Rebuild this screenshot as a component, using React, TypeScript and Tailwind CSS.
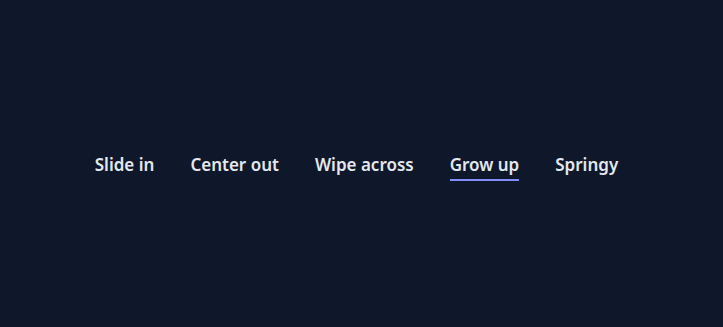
import React from "react";

const items = ["Slide in", "Center out", "Wipe across", "Grow up", "Springy"];

export default function App() {
  return (
    <div className="w-full h-[327px] bg-[#0f172a] flex items-center justify-center" style={{ fontFamily: '"Noto Sans", "Open Sans", sans-serif' }}>
      <nav className="flex items-center gap-9 mt-[6px] mr-[10px]">
        {items.map((t) => (
          <a key={t} className={`relative text-[17px] leading-[24px] font-semibold text-slate-200 pb-[2px] ${t === "Grow up" ? "border-b-2 border-[#818cf8]" : "border-b-2 border-transparent"}`}>
            {t}
          </a>
        ))}
      </nav>
    </div>
  );
}
